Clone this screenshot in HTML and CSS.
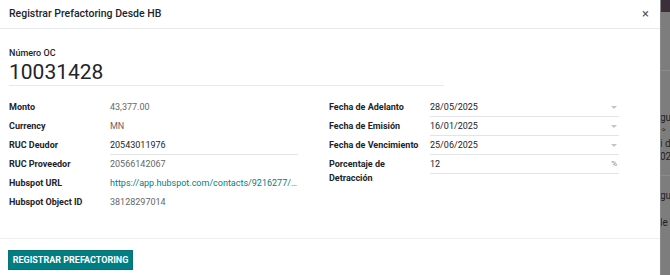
FILE: index.html
```html
<!DOCTYPE html>
<html lang="es">
<head>
    <meta charset="UTF-8">
    <title>Registrar Prefactoring Desde HB</title>
    <link rel="stylesheet" href="styles.css">
</head>
<body>
    <div class="modal">
        <div class="modal-header">
            <h4 class="modal-title">Registrar Prefactoring Desde HB</h4>
            <span class="close">×</span>
        </div>

        <div class="modal-body">
            <div class="oc-label">Número OC</div>
            <div class="oc-number">10031428</div>

            <div class="groups">
                <!-- Grupo izquierdo -->
                <div class="group">
                    <div class="row">
                        <div class="label">Monto</div>
                        <div class="value muted">43,377.00</div>
                    </div>
                    <div class="row">
                        <div class="label">Currency</div>
                        <div class="value muted">MN</div>
                    </div>
                    <div class="row">
                        <div class="label">RUC Deudor</div>
                        <div class="value field">20543011976</div>
                    </div>
                    <div class="row">
                        <div class="label">RUC Proveedor</div>
                        <div class="value muted">20566142067</div>
                    </div>
                    <div class="row">
                        <div class="label">Hubspot URL</div>
                        <div class="value link">https://app.hubspot.com/contacts/9216277/record/0-1/38128297014</div>
                    </div>
                    <div class="row">
                        <div class="label">Hubspot Object ID</div>
                        <div class="value muted">38128297014</div>
                    </div>
                </div>

                <!-- Grupo derecho -->
                <div class="group right">
                    <div class="row">
                        <div class="label">Fecha de Adelanto</div>
                        <div class="value field">28/05/2025<span class="caret"></span></div>
                    </div>
                    <div class="row">
                        <div class="label">Fecha de Emisión</div>
                        <div class="value field">16/01/2025<span class="caret"></span></div>
                    </div>
                    <div class="row">
                        <div class="label">Fecha de Vencimiento</div>
                        <div class="value field">25/06/2025<span class="caret"></span></div>
                    </div>
                    <div class="row">
                        <div class="label two-line">
                            <span>Porcentaje de</span>
                            <span>Detracción</span>
                        </div>
                        <div class="value field">12<span class="unit">%</span></div>
                    </div>
                </div>
            </div>
        </div>

        <div class="modal-footer">
            <button class="btn-primary">Registrar Prefactoring</button>
        </div>
    </div>

    <div class="backdrop">
        <div class="bd-nav"></div>
        <div class="bd-block"></div>
        <div class="bd-block tall">
            <span class="bd-text">gu</span>
            <span class="bd-text small">-&gt;</span>
            <span class="bd-text">i d</span>
            <span class="bd-text">02</span>
        </div>
        <div class="bd-block last">
            <span class="bd-text">gu</span>
            <span class="bd-text spaced">le</span>
        </div>
    </div>
</body>
</html>
```

FILE: styles.css
```css
body {
    margin: 0;
    display: flex;
    height: 275px;
    overflow: hidden;
    font-family: Roboto, "Liberation Sans", sans-serif;
    color: #212529;
    background: #7b7b7b;
}

.modal {
    width: 660px;
    flex-shrink: 0;
    background: #fff;
    display: flex;
    flex-direction: column;
}

.modal-header {
    display: flex;
    justify-content: space-between;
    align-items: center;
    flex-shrink: 0;
    height: 26px;
    padding: 0 9px 2px 9px;
    border-bottom: 1px solid #e7e9ed;
}

.modal-title {
    margin: 0;
    font-size: 10.5px;
    font-weight: 500;
}

.close {
    font-size: 13px;
    color: #555;
    margin-right: 2px;
}

.modal-body {
    flex-shrink: 0;
    padding: 18px 9px 0 9px;
    height: 191px;
}

.oc-label {
    font-size: 9px;
    font-weight: 500;
    line-height: 12px;
}

.oc-number {
    width: 435px;
    font-size: 21px;
    line-height: 26px;
    border-bottom: 1px solid #e9e9e9;
    margin-bottom: 12px;
}

.groups {
    display: grid;
    grid-template-columns: 320px 291px;
}

.row {
    display: flex;
    font-size: 9px;
    min-height: 19px;
}

.label {
    width: 101px;
    flex-shrink: 0;
    font-weight: 700;
    line-height: 18px;
}

.label.two-line {
    display: flex;
    flex-direction: column;
    line-height: 14px;
    padding-top: 2px;
}

.value {
    width: 188px;
    height: 19px;
    line-height: 18px;
    white-space: nowrap;
    overflow: hidden;
    text-overflow: ellipsis;
}

.right .value {
    width: 189px;
}

.value.muted {
    color: #666;
}

.value.link {
    color: #017e84;
}

.value.field {
    position: relative;
    height: 18px;
    border-bottom: 1px solid #e2e4e7;
}

.caret {
    position: absolute;
    right: 2px;
    top: 8px;
    border-left: 3px solid transparent;
    border-right: 3px solid transparent;
    border-top: 3px solid #c4c4c4;
}

.unit {
    position: absolute;
    right: 2px;
    color: #888;
    font-size: 8px;
}

.modal-footer {
    border-top: 1px solid #eceef1;
    padding: 9px 8px;
}

.btn-primary {
    background: #017e84;
    color: #fff;
    border: 1px solid #0a7177;
    font-family: inherit;
    font-weight: 700;
    font-size: 9px;
    text-transform: uppercase;
    height: 20px;
    width: 125px;
    padding: 0;
}

.backdrop {
    flex: 1;
    display: flex;
    flex-direction: column;
    background: #7d7d7d;
    border-left: 1px solid #8a8a8a;
    overflow: hidden;
}

.bd-nav {
    height: 12px;
    background: #3b2f3b;
}

.bd-block {
    height: 58px;
    border-bottom: 1px solid #8c8c8c;
}

.bd-block.tall {
    height: 105px;
    padding-top: 40px;
    box-sizing: border-box;
    display: flex;
    flex-direction: column;
}

.bd-block.last {
    flex: 1;
    border-bottom: none;
    padding-top: 13px;
    display: flex;
    flex-direction: column;
}

.bd-text {
    font-size: 10px;
    line-height: 13px;
    color: #222;
    white-space: nowrap;
    margin-left: -1px;
}

.bd-text.small {
    font-size: 7px;
}

.bd-text.spaced {
    margin-top: 14px;
}
```
